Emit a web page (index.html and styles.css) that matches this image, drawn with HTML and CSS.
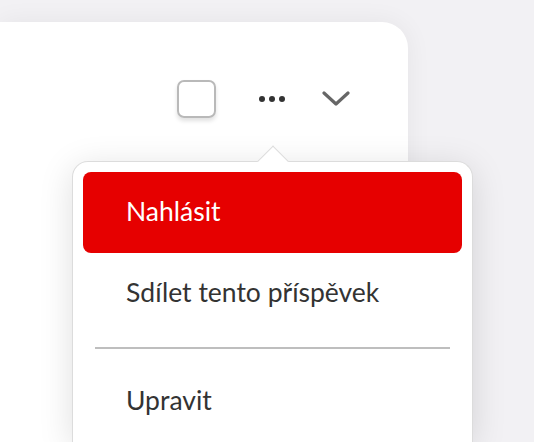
FILE: index.html
```html
<!DOCTYPE html>
<html>

<head>
    <link rel="stylesheet" href="styles.css">
</head>

<body>

    <div class="card">
        <div class="toolbar">
            <span class="checkbox"></span>
            <button class="icon-btn dots" aria-label="Více">
                <span></span><span></span><span></span>
            </button>
            <button class="icon-btn chevron" aria-label="Rozbalit">
                <svg width="28" height="16" viewBox="0 0 28 16">
                    <polyline points="2,2 14,13 26,2" fill="none" stroke="#666" stroke-width="3.2" stroke-linecap="round" stroke-linejoin="round" />
                </svg>
            </button>
        </div>
    </div>

    <div class="menu">
        <a class="menu-item active" href="#">Nahlásit</a>
        <a class="menu-item" href="#">Sdílet tento příspěvek</a>
        <hr class="divider">
        <a class="menu-item" href="#">Upravit</a>
    </div>

</body>

</html>
```

FILE: styles.css
```css
body {
    font-family: Lato, "Open Sans", sans-serif;
    background-color: #f2f1f4;
    margin: 0;
    height: 442px;
    overflow: hidden;
    position: relative;
}

.card {
    margin-top: 22px;
    width: 408px;
    height: 420px;
    background: white;
    border-top-right-radius: 26px;
    box-shadow: 0 0 26px rgba(0, 0, 0, 0.06);
}

.toolbar {
    display: flex;
    align-items: center;
    justify-content: flex-end;
    padding: 58px 58px 0 0;
}

.checkbox {
    width: 35px;
    height: 34px;
    border: 2px solid #b9b9b9;
    border-radius: 7px;
    box-shadow: 0 3px 4px rgba(0, 0, 0, 0.12);
}

.icon-btn {
    background: none;
    border: none;
    padding: 0;
    cursor: pointer;
    display: flex;
    align-items: center;
}

.dots {
    gap: 4px;
    margin-left: 43px;
}

.dots span {
    width: 6px;
    height: 6px;
    border-radius: 50%;
    background-color: #333;
}

.chevron {
    margin-left: 37px;
}

.menu {
    position: absolute;
    left: 72px;
    top: 161px;
    width: 379px;
    height: 270px;
    padding: 10px 10px 0;
    background: white;
    border: 1px solid #dcdcdc;
    border-bottom: none;
    border-radius: 16px 16px 0 0;
    box-shadow: 0 6px 34px rgba(0, 0, 0, 0.13);
    display: flex;
    flex-direction: column;
}

.menu::before {
    content: "";
    position: absolute;
    left: 189px;
    top: -12px;
    width: 22px;
    height: 22px;
    box-sizing: border-box;
    background: white;
    border-top: 1px solid #dcdcdc;
    border-left: 1px solid #dcdcdc;
    transform: rotate(45deg);
}

.menu-item {
    position: relative;
    flex-shrink: 0;
    display: block;
    height: 81px;
    line-height: 78px;
    padding-left: 43px;
    font-size: 26.5px;
    color: #333;
    text-decoration: none;
    border-radius: 8px;
}

.menu-item.active {
    background-color: #e60000;
    color: white;
}

.divider {
    flex-shrink: 0;
    margin: 13px 12px 12px;
    border: none;
    border-top: 2px solid #bebebe;
}
```
